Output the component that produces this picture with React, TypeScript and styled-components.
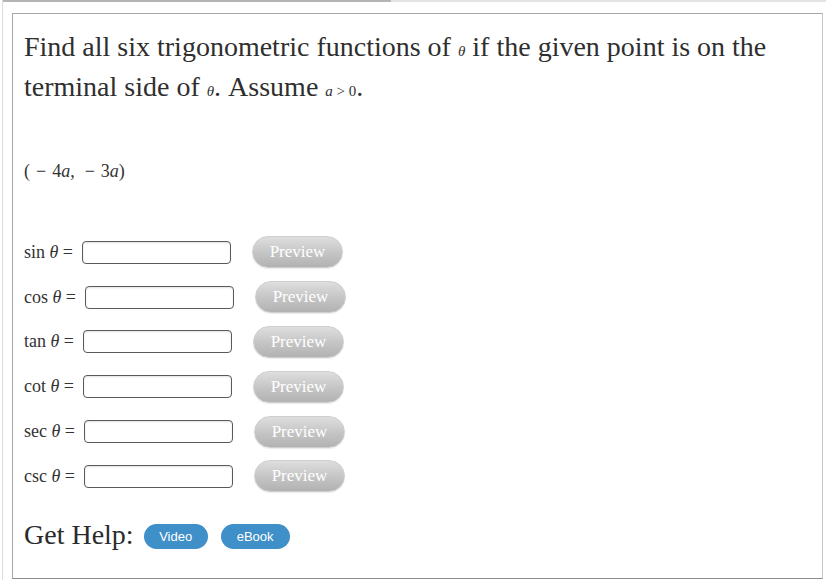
import * as React from 'react';
import styled, { createGlobalStyle } from 'styled-components';

const GlobalStyle = createGlobalStyle`
  html, body {
    margin: 0;
    padding: 0;
    background: #ffffff;
  }
  body {
    font-family: 'Liberation Serif', 'Times New Roman', serif;
    color: #2e2e2e;
  }
`;

const functions = ['sin', 'cos', 'tan', 'cot', 'sec', 'csc'];

const App: React.FC = () => (
  <>
    <GlobalStyle />
    <Page>
      <TopRule />
      <QuestionBox>
        <Prompt>
          Find all six trigonometric functions of <SmallMath>θ</SmallMath> if the given point is on the
          terminal side of <SmallMath>θ</SmallMath>. Assume{' '}
          <SmallMath>
            a <Upright>&gt; 0</Upright>
          </SmallMath>
          .
        </Prompt>
        <Point>
          (<Op>−</Op>4<Var>a</Var>,<Op wide>−</Op>3<Var>a</Var>)
        </Point>
        <Rows>
          {functions.map((fn) => (
            <Row key={fn}>
              <Label>
                {fn} <Var>θ</Var> =
              </Label>
              <AnswerInput type="text" />
              <PreviewButton type="button">Preview</PreviewButton>
            </Row>
          ))}
        </Rows>
        <HelpRow>
          <HelpTitle>Get Help:</HelpTitle>
          <HelpButton type="button">Video</HelpButton>
          <HelpButton type="button" wide>
            eBook
          </HelpButton>
        </HelpRow>
      </QuestionBox>
    </Page>
  </>
);

export default App;

const Page = styled.div`
  display: flex;
  flex-direction: column;
  height: 580px;
  margin-left: 2px;
  border-left: 1px solid #dcdcdc;
  box-sizing: border-box;
`;

const TopRule = styled.div`
  height: 2px;
  background: linear-gradient(to right, #b4b4b4 0, #b4b4b4 388px, #e4e4e4 388px);
`;

const QuestionBox = styled.div`
  flex: 1;
  display: flex;
  flex-direction: column;
  margin: 11px 3px 1px 9px;
  padding: 13px 11px 0 11px;
  border: 1px solid #a8a8a8;
  border-bottom-color: #8c8c8c;
  border-right-color: #c4c4c4;
`;

const Prompt = styled.div`
  font-size: 28px;
  line-height: 40px;
  color: #2f2f2f;
`;

const SmallMath = styled.span`
  font-size: 15px;
  line-height: 1;
  font-style: italic;
`;

const Upright = styled.span`
  font-style: normal;
`;

const Var = styled.span`
  font-style: italic;
`;

const Op = styled.span<{ wide?: boolean }>`
  margin-left: ${({ wide }) => (wide ? '10px' : '6px')};
  margin-right: 6px;
`;

const Point = styled.div`
  margin-top: 52px;
  font-size: 18px;
  line-height: 24px;
  color: #333;
`;

const Rows = styled.div`
  display: flex;
  flex-direction: column;
  margin-top: 47px;
`;

const Row = styled.div`
  display: flex;
  align-items: center;
  height: 44.8px;
`;

const Label = styled.span`
  font-size: 18px;
  color: #333;
  margin-right: 9px;
  white-space: pre;
`;

const AnswerInput = styled.input`
  width: 149px;
  height: 23px;
  box-sizing: border-box;
  border: 1px solid #5a5a5a;
  border-radius: 4px;
  box-shadow: inset 0 1px 2px rgba(0, 0, 0, 0.12);
  background: #fff;
  padding: 0 4px;
  outline: none;
`;

const PreviewButton = styled.button`
  margin-left: 21px;
  width: 91px;
  height: 32px;
  border-radius: 16px;
  border: 1px solid #cfcfcf;
  background: linear-gradient(to bottom, #dedede 0%, #c4c4c4 55%, #b2b2b2 100%);
  box-shadow: 0 1px 1px rgba(0, 0, 0, 0.08);
  color: #ffffff;
  font-family: 'Liberation Serif', 'Times New Roman', serif;
  font-size: 17px;
  padding: 0;
  cursor: pointer;
`;

const HelpRow = styled.div`
  display: flex;
  align-items: center;
  margin-top: 16px;
`;

const HelpTitle = styled.span`
  font-size: 28px;
  line-height: 40px;
  color: #2b2b2b;
  margin-right: 10px;
`;

const HelpButton = styled.button<{ wide?: boolean }>`
  width: ${({ wide }) => (wide ? '69px' : '64px')};
  height: 25px;
  margin-right: 13px;
  margin-top: 4px;
  border: none;
  border-radius: 13px;
  background: #3f8fc9;
  color: #ffffff;
  font-family: 'Liberation Sans', Arial, sans-serif;
  font-size: 13px;
  padding: 0;
  cursor: pointer;
`;
